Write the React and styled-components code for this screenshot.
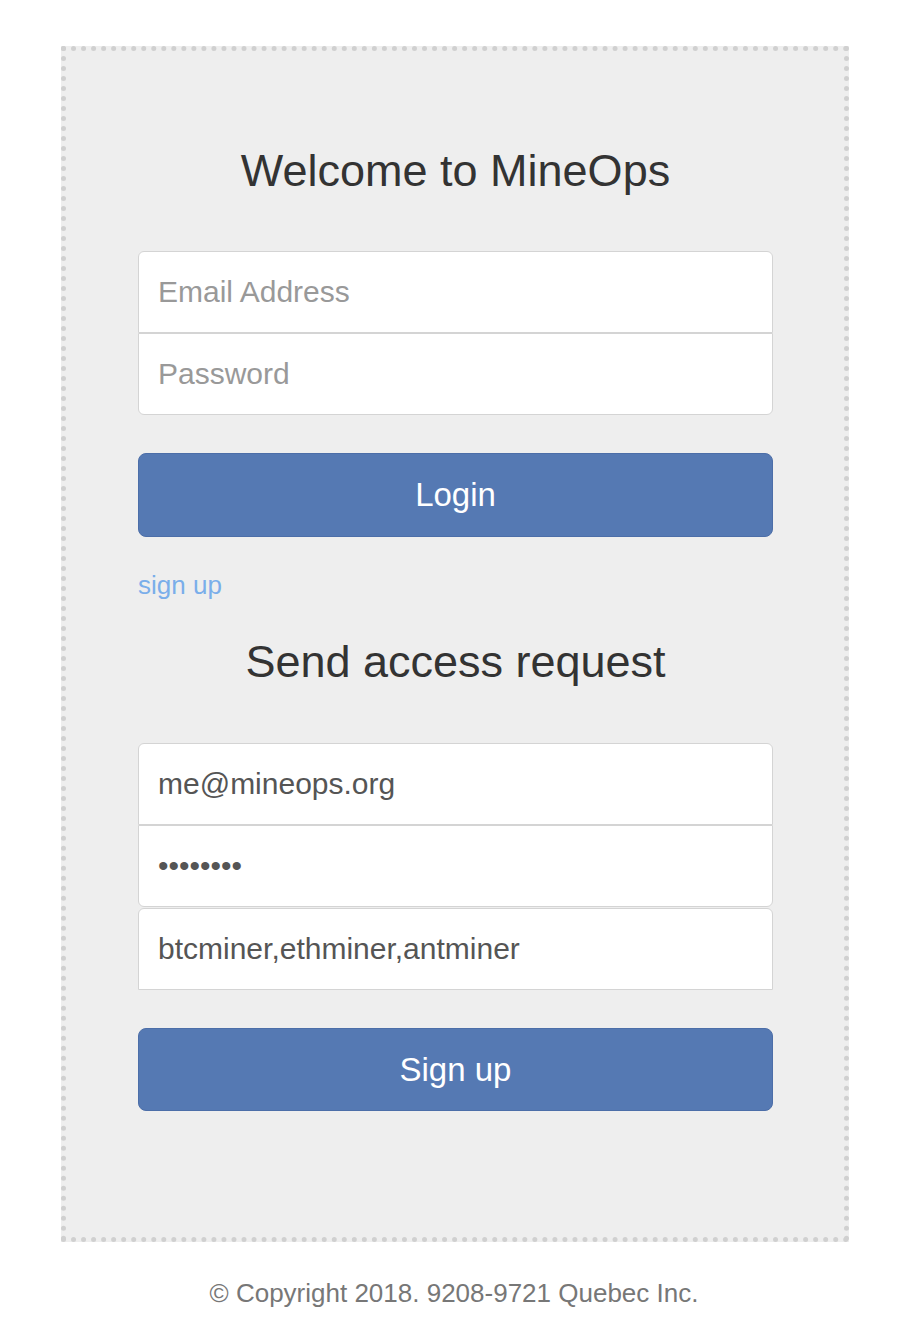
import React from "react";
import styled, { createGlobalStyle } from "styled-components";

const GlobalStyle = createGlobalStyle`
  body {
    margin: 0;
    background: #fff;
    font-family: "Liberation Sans", Arial, sans-serif;
    color: #333;
  }
  * { box-sizing: border-box; }
`;

const Page = styled.div`
  width: 907px;
  padding-top: 46px;
`;

const Panel = styled.div`
  margin-left: 61px;
  width: 788px;
  background: #eee;
  border: 5px dotted #d0d0d0;
  padding: 95px 71px 126px 72px;
  display: flex;
  flex-direction: column;
`;

const Heading = styled.h2`
  margin: ${(p) => p.$top || 0}px 0 0;
  font-size: 45px;
  line-height: 50px;
  font-weight: normal;
  text-align: center;
  color: #333;
`;

const Group = styled.div`
  display: flex;
  flex-direction: column;
  margin-top: ${(p) => p.$top}px;
`;

const Input = styled.input`
  display: block;
  width: 100%;
  height: 82px;
  margin: ${(p) => p.$gap || 0}px 0 0;
  padding: 0 19px;
  font-family: "Liberation Sans", Arial, sans-serif;
  font-size: 30px;
  color: #555;
  background: #fff;
  border: 1px solid #d4d4d4;
  border-radius: ${(p) => p.$radius || "0"};
  outline: none;
  &::placeholder {
    color: #999;
  }
`;

const Button = styled.button`
  display: block;
  width: 100%;
  height: ${(p) => p.$h || 84}px;
  margin-top: 38px;
  padding: 0;
  border: 1px solid #4c6ea8;
  border-radius: 8px;
  background: #5579b3;
  color: #fff;
  font-family: "Liberation Sans", Arial, sans-serif;
  font-size: 33px;
  cursor: pointer;
`;

const LinkRow = styled.div`
  margin-top: 33px;
  line-height: 30px;
`;

const Link = styled.a`
  font-size: 26px;
  color: #7aaeea;
  text-decoration: none;
`;

const Footer = styled.footer`
  margin-top: 36px;
  text-align: center;
  font-size: 26px;
  line-height: 30px;
  color: #777;
  padding-left: 1px;
`;

export default function App() {
  return (
    <Page>
      <GlobalStyle />
      <Panel>
        <Heading>Welcome to MineOps</Heading>
        <Group $top={55}>
          <Input type="email" placeholder="Email Address" $radius="6px 6px 0 0" />
          <Input type="password" placeholder="Password" $radius="0 0 6px 6px" />
        </Group>
        <Button>Login</Button>
        <LinkRow>
          <Link href="#">sign up</Link>
        </LinkRow>
        <Heading $top={33}>Send access request</Heading>
        <Group $top={56}>
          <Input type="email" defaultValue="me@mineops.org" $radius="6px 6px 0 0" />
          <Input type="password" defaultValue="password" $radius="0 0 6px 6px" />
          <Input type="text" defaultValue="btcminer,ethminer,antminer" $radius="6px 6px 0 0" $gap={1} />
        </Group>
        <Button $h={83}>Sign up</Button>
      </Panel>
      <Footer>© Copyright 2018. 9208-9721 Quebec Inc.</Footer>
    </Page>
  );
}
